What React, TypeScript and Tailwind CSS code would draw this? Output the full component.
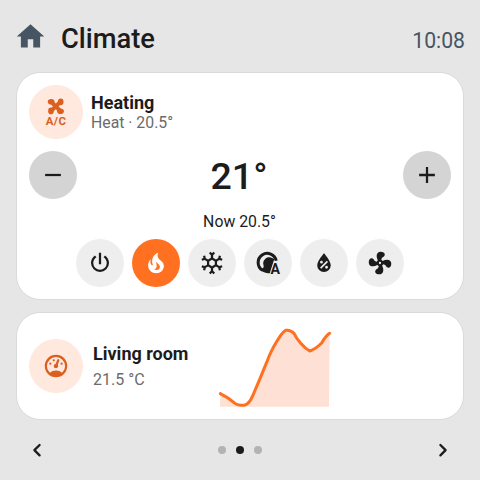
import type { ReactNode } from 'react';
import clsx from 'clsx';

const ICONS = {
  home: 'M10,20V14H14V20H19V12H22L12,3L2,12H5V20H10Z',
  minus: 'M19,13H5V11H19V13Z',
  plus: 'M19,13H13V19H11V13H5V11H11V5H13V11H19V13Z',
  power:
    'M16.56,5.44L15.11,6.89C16.84,7.94 18,9.83 18,12A6,6 0 0,1 12,18A6,6 0 0,1 6,12C6,9.83 7.16,7.94 8.88,6.88L7.44,5.44C5.36,6.88 4,9.28 4,12A8,8 0 0,0 12,20A8,8 0 0,0 20,12C20,9.28 18.64,6.88 16.56,5.44M13,3H11V13H13',
  fire: 'M17.66 11.2C17.43 10.9 17.15 10.64 16.89 10.38C16.22 9.78 15.46 9.35 14.82 8.72C13.33 7.26 13 4.85 13.95 3C13 3.23 12.17 3.75 11.46 4.32C8.87 6.4 7.85 10.07 9.07 13.22C9.11 13.32 9.15 13.42 9.15 13.55C9.15 13.77 9 13.97 8.8 14.05C8.57 14.15 8.33 14.09 8.14 13.93C8.08 13.88 8.04 13.83 8 13.76C6.87 12.33 6.69 10.28 7.45 8.64C5.78 10 4.87 12.3 5 14.47C5.06 14.97 5.12 15.47 5.29 15.97C5.43 16.57 5.7 17.17 6 17.7C7.08 19.43 8.95 20.67 10.96 20.92C13.1 21.19 15.39 20.8 17.03 19.32C18.86 17.66 19.5 15 18.56 12.72L18.43 12.46C18.22 12 17.66 11.2 17.66 11.2M14.5 17.5C14.22 17.74 13.76 18 13.4 18.1C12.28 18.5 11.16 17.94 10.5 17.28C11.69 17 12.4 16.12 12.61 15.23C12.78 14.43 12.46 13.77 12.33 13C12.21 12.26 12.23 11.63 12.5 10.94C12.69 11.32 12.89 11.7 13.13 12C13.9 13 15.11 13.44 15.37 14.8C15.41 14.94 15.43 15.08 15.43 15.23C15.46 16.05 15.1 16.95 14.5 17.5H14.5Z',
  snowflake:
    'M20.79,13.95L18.46,14.57L16.46,13.44V10.56L18.46,9.43L20.79,10.05L21.31,8.12L19.54,7.65L20,5.88L18.07,5.36L17.45,7.69L15.45,8.82L13,7.38V5.12L14.71,3.41L13.29,2L12,3.29L10.71,2L9.29,3.41L11,5.12V7.38L8.5,8.82L6.5,7.69L5.92,5.36L4,5.88L4.47,7.65L2.7,8.12L3.22,10.05L5.55,9.43L7.55,10.56V13.45L5.55,14.58L3.22,13.96L2.7,15.89L4.47,16.36L4,18.12L5.93,18.64L6.55,16.31L8.55,15.18L11,16.62V18.88L9.29,20.59L10.71,22L12,20.71L13.29,22L14.7,20.59L13,18.88V16.62L15.5,15.17L17.5,16.3L18.12,18.63L20,18.12L19.53,16.35L21.3,15.88L20.79,13.95M9.5,10.56L12,9.11L14.5,10.56V13.44L12,14.89L9.5,13.44V10.56Z',
  humidity:
    'M12,3.25C12,3.25 6,10 6,14C6,17.32 8.69,20 12,20A6,6 0 0,0 18,14C18,10 12,3.25 12,3.25M14.47,9.97L15.53,11.03L9.53,17.03L8.47,15.97M9.75,10A1.25,1.25 0 0,1 11,11.25A1.25,1.25 0 0,1 9.75,12.5A1.25,1.25 0 0,1 8.5,11.25A1.25,1.25 0 0,1 9.75,10M14.25,14.5A1.25,1.25 0 0,1 15.5,15.75A1.25,1.25 0 0,1 14.25,17A1.25,1.25 0 0,1 13,15.75A1.25,1.25 0 0,1 14.25,14.5Z',
  fan: 'M12,11A1,1 0 0,0 11,12A1,1 0 0,0 12,13A1,1 0 0,0 13,12A1,1 0 0,0 12,11M12.5,2C17,2 17.11,5.57 14.75,6.75C13.76,7.24 13.32,8.29 13.13,9.22C13.61,9.42 14.03,9.73 14.35,10.13C18.05,8.13 22.03,8.92 22.03,12.5C22.03,17 18.46,17.1 17.28,14.73C16.78,13.74 15.72,13.3 14.79,13.11C14.59,13.59 14.28,14 13.88,14.34C15.87,18.03 15.08,22 11.5,22C7,22 6.91,18.42 9.27,17.24C10.25,16.75 10.69,15.71 10.89,14.79C10.4,14.59 9.97,14.27 9.65,13.87C5.96,15.85 2,15.07 2,11.5C2,7 5.56,6.89 6.74,9.26C7.24,10.25 8.29,10.68 9.22,10.87C9.41,10.39 9.73,9.97 10.14,9.65C8.15,5.96 8.94,2 12.5,2Z',
  gauge:
    'M12,2A10,10 0 0,0 2,12A10,10 0 0,0 12,22A10,10 0 0,0 22,12A10,10 0 0,0 12,2M12,4A8,8 0 0,1 20,12C20,14.4 19,16.5 17.3,18C15.9,16.7 14,16 12,16C10,16 8.2,16.7 6.7,18C5,16.5 4,14.4 4,12A8,8 0 0,1 12,4M14,5.89C13.62,5.9 13.26,6.15 13.1,6.54L11.81,9.77L11.71,10C11,10.13 10.41,10.6 10.14,11.26C9.73,12.29 10.23,13.45 11.26,13.86C12.29,14.27 13.45,13.77 13.86,12.74C14.12,12.08 14,11.32 13.57,10.76L13.67,10.5L14.96,7.29L14.97,7.26C15.17,6.75 14.92,6.17 14.41,5.96C14.28,5.91 14.15,5.89 14,5.89M10,6A1,1 0 0,0 9,7A1,1 0 0,0 10,8A1,1 0 0,0 11,7A1,1 0 0,0 10,6M7,9A1,1 0 0,0 6,10A1,1 0 0,0 7,11A1,1 0 0,0 8,10A1,1 0 0,0 7,9M17,9A1,1 0 0,0 16,10A1,1 0 0,0 17,11A1,1 0 0,0 18,10A1,1 0 0,0 17,9Z',
};

// a 24 unit icon drawn 27px wide, centred in an even 28px box
const VIEW_BOX = '-0.44 -0.44 24.88 24.88';

// Temperature history, in thirds of a pixel
const LINE =
  'M46,236C60,243 75,252 90,265C98,271 108,271 116,271C130,270 138,256 150,226C166,190 174,168 186,140C194,116 204,98 216,78C226,64 232,50 242,46C252,44 260,48 267,55C276,74 296,98 314,108C328,104 340,94 350,84C358,70 366,60 374,55';

function Icon({ path }: { path: string }) {
  return (
    <svg viewBox={VIEW_BOX} fill="currentColor" className="size-7">
      <path d={path} />
    </svg>
  );
}

function AirConditionerIcon() {
  return (
    <svg viewBox={VIEW_BOX} fill="currentColor" className="size-7 overflow-visible">
      <path
        d="M7.6 2.8L16 11.2M16 2.8L7.6 11.2"
        stroke="currentColor"
        strokeWidth="3.6"
        strokeLinecap="round"
      />
      <ellipse cx="7.7" cy="2.9" rx="3" ry="2.5" />
      <ellipse cx="16.2" cy="3" rx="2.5" ry="3" />
      <ellipse cx="16" cy="11.3" rx="3" ry="2.5" />
      <ellipse cx="7.5" cy="11.1" rx="2.5" ry="3" />
      <text
        x="3"
        y="23.6"
        fontSize="10.2"
        textLength="17.8"
        className="font-['Roboto',sans-serif] font-bold">
        A/C
      </text>
    </svg>
  );
}

function AutoIcon() {
  return (
    <svg viewBox={VIEW_BOX} className="size-7 overflow-visible">
      <path
        d="M7 18.4A8.1 8.1 0 1 1 19.3 10"
        fill="none"
        stroke="currentColor"
        strokeWidth="2.7"
      />
      <path
        d="M5 17.6C6.5 19.8 9 21 12 21H13.6L15.6 14.6L17.6 8.4L15.6 7.6C14 6.6 11.4 6.8 9.7 8.2C7.8 9.8 7.4 12 8 14C8.4 15.4 8.2 16 7 16.8Z"
        fill="currentColor"
      />
      <text
        x="14.2"
        y="22.2"
        fontSize="12.6"
        fill="currentColor"
        stroke="#eeeeee"
        strokeWidth="0.9"
        paintOrder="stroke"
        className="font-['Roboto',sans-serif] font-bold">
        A
      </text>
    </svg>
  );
}

function Badge({ children }: { children: ReactNode }) {
  return (
    <div className="flex size-[54px] shrink-0 items-center justify-center rounded-full bg-[#ffe8de] text-[#d9601f]">
      {children}
    </div>
  );
}

function StepButton({ path, label }: { path: string; label: string }) {
  return (
    <button
      type="button"
      aria-label={label}
      className="flex size-12 items-center justify-center rounded-full bg-[#d4d4d4]">
      <Icon path={path} />
    </button>
  );
}

const MODES = [
  { id: 'off', icon: <Icon path={ICONS.power} /> },
  { id: 'heat', icon: <Icon path={ICONS.fire} /> },
  { id: 'cool', icon: <Icon path={ICONS.snowflake} /> },
  { id: 'auto', icon: <AutoIcon /> },
  { id: 'dry', icon: <Icon path={ICONS.humidity} /> },
  { id: 'fan', icon: <Icon path={ICONS.fan} /> },
];

function ClimateCard() {
  return (
    <section className="h-[228px] rounded-[24px] border border-[#dadada] bg-white px-3 pt-3">
      <div className="flex items-center gap-2">
        <Badge>
          <AirConditionerIcon />
        </Badge>
        <div>
          <h2 className="text-[18px] leading-5 font-bold">Heating</h2>
          <p className="text-[15.8px] leading-[19px] text-[#6b6b6b]">Heat · 20.5°</p>
        </div>
      </div>
      <div className="mt-3 flex items-center justify-between">
        <StepButton path={ICONS.minus} label="Decrease" />
        <span className="pt-[3px] pr-0.5 text-[37.5px] leading-none font-medium">21°</span>
        <StepButton path={ICONS.plus} label="Increase" />
      </div>
      <p className="mt-[13px] pr-px text-center text-[15.8px] leading-5">Now 20.5°</p>
      <div className="mt-[7px] flex justify-center gap-2">
        {MODES.map((mode) => (
          <button
            key={mode.id}
            type="button"
            aria-label={mode.id}
            className={clsx(
              'flex size-12 items-center justify-center rounded-full',
              mode.id === 'heat' ? 'bg-[#ff7020] text-white' : 'bg-[#eeeeee]'
            )}>
            {mode.icon}
          </button>
        ))}
      </div>
    </section>
  );
}

function SensorCard() {
  return (
    <section className="mt-3 flex h-[108px] items-center rounded-[24px] border border-[#dadada] bg-white pl-3">
      <Badge>
        <Icon path={ICONS.gauge} />
      </Badge>
      <div className="ml-2.5 w-[126px] pt-0.5">
        <h2 className="text-[18px] leading-6 font-bold">Living room</h2>
        <p className="mt-0.5 text-[16px] leading-6 text-[#6b6b6b]">21.5 °C</p>
      </div>
      <svg viewBox="42 36 339 243" className="mt-0.5 h-[81px] w-[113px]">
        <path d={`${LINE}L372,275H45Z`} fill="#fee1d4" />
        <path
          d={LINE}
          fill="none"
          stroke="#ff7020"
          strokeWidth="9"
          strokeLinecap="round"
          strokeLinejoin="round"
        />
      </svg>
    </section>
  );
}

function Chevron({ points }: { points: string }) {
  return (
    <svg
      viewBox="0 0 24 24"
      fill="none"
      stroke="currentColor"
      strokeWidth="2.3"
      strokeLinecap="round"
      strokeLinejoin="round"
      className="size-6">
      <polyline points={points} />
    </svg>
  );
}

export default function App() {
  return (
    <div className="flex h-[480px] w-[480px] flex-col bg-[#e6e6e6] px-4 font-['Roboto',sans-serif] text-[#1c1c1c]">
      <header className="flex h-[72px] items-center pt-1">
        <svg
          viewBox="0 0 24 24"
          fill="currentColor"
          className="mb-1 -ml-0.5 size-[33px] text-[#475562]">
          <path d={ICONS.home} />
        </svg>
        <h1 className="ml-3.5 pt-0.5 text-[27.3px] leading-8 font-medium">Climate</h1>
        <time className="-mr-px ml-auto pt-1.5 text-[21.2px] leading-6 text-[#475562]">10:08</time>
      </header>
      <ClimateCard />
      <SensorCard />
      <footer className="flex h-[60px] items-center justify-between px-[9px]">
        <Chevron points="14.6,7 9.4,12.1 14.6,17.4" />
        <div className="flex gap-2.5">
          <span className="size-2 rounded-full bg-[#b3b3b3]" />
          <span className="size-2 rounded-full bg-[#1c1c1c]" />
          <span className="size-2 rounded-full bg-[#b3b3b3]" />
        </div>
        <Chevron points="9.4,7 14.6,12.1 9.4,17.4" />
      </footer>
    </div>
  );
}
